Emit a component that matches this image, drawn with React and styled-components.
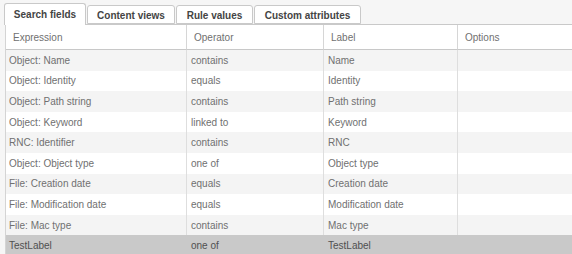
import React from "react";
import styled, { createGlobalStyle } from "styled-components";

const Global = createGlobalStyle`
  html, body { margin: 0; padding: 0; background: #f6f6f6; }
  body { font-family: "Liberation Sans", Arial, Helvetica, sans-serif; }
`;

const Page = styled.div`
  width: 572px;
  height: 254px;
  overflow: hidden;
  background: #f6f6f6;
  padding: 3px 0 0 4px;
  box-sizing: border-box;
  display: flex;
  flex-direction: column;
`;

const TabBar = styled.div`
  display: flex;
  align-items: flex-end;
  gap: 1px;
  height: 21px;
  position: relative;
  z-index: 1;
`;

const Tab = styled.div`
  box-sizing: border-box;
  height: ${(p) => (p.$active ? "22px" : "19px")};
  margin-bottom: ${(p) => (p.$active ? "-1px" : "0")};
  width: ${(p) => p.$w}px;
  display: flex;
  align-items: center;
  justify-content: center;
  padding-top: ${(p) => (p.$active ? "0" : "1px")};
  background: #ffffff;
  border: 1px solid #c9c9c9;
  border-bottom: ${(p) => (p.$active ? "none" : "1px solid #c9c9c9")};
  border-radius: 3px 3px 0 0;
  font-size: 10px;
  font-weight: bold;
  color: #444;
  white-space: nowrap;
`;

const Table = styled.div`
  margin-left: 1px;
  background: #ffffff;
  border-top: 1px solid #c9c9c9;
  border-left: 1px solid #d4d4d4;
  display: grid;
  grid-template-columns: 180px 137px 134px 1fr;
  flex: 1;
  align-content: start;
`;

const HeadCell = styled.div`
  box-sizing: border-box;
  height: 25px;
  display: flex;
  align-items: center;
  padding-left: 7px;
  font-size: 10px;
  color: #707070;
  background: #ffffff;
  border-bottom: 1px solid #c8c8c8;
  border-left: ${(p) => (p.$first ? "none" : "1px solid #d6d6d6")};
`;

const Cell = styled.div`
  box-sizing: border-box;
  height: 20.6px;
  display: flex;
  align-items: center;
  padding-left: ${(p) => (p.$first ? "3px" : "4px")};
  font-size: 10px;
  color: ${(p) => (p.$selected ? "#505050" : "#707070")};
  background: ${(p) =>
    p.$selected ? "#c9c9c9" : p.$odd ? "#f4f4f4" : "#ffffff"};
  border-left: ${(p) =>
    p.$first ? "none" : p.$selected ? "1px solid #c9c9c9" : "1px solid #dedede"};
  white-space: nowrap;
`;

const tabs = [
  { label: "Search fields", w: 82, active: true },
  { label: "Content views", w: 88 },
  { label: "Rule values", w: 77 },
  { label: "Custom attributes", w: 107 },
];

const rows = [
  ["Object: Name", "contains", "Name"],
  ["Object: Identity", "equals", "Identity"],
  ["Object: Path string", "contains", "Path string"],
  ["Object: Keyword", "linked to", "Keyword"],
  ["RNC: Identifier", "contains", "RNC"],
  ["Object: Object type", "one of", "Object type"],
  ["File: Creation date", "equals", "Creation date"],
  ["File: Modification date", "equals", "Modification date"],
  ["File: Mac type", "contains", "Mac type"],
  ["TestLabel", "one of", "TestLabel"],
];

export default function App() {
  return (
    <>
      <Global />
      <Page>
        <TabBar>
          {tabs.map((t) => (
            <Tab key={t.label} $w={t.w} $active={t.active}>
              {t.label}
            </Tab>
          ))}
        </TabBar>
        <Table>
          <HeadCell $first>Expression</HeadCell>
          <HeadCell>Operator</HeadCell>
          <HeadCell>Label</HeadCell>
          <HeadCell>Options</HeadCell>
          {rows.map((r, i) => {
            const odd = i % 2 === 0;
            const selected = i === rows.length - 1;
            return (
              <React.Fragment key={i}>
                <Cell $first $odd={odd} $selected={selected}>{r[0]}</Cell>
                <Cell $odd={odd} $selected={selected}>{r[1]}</Cell>
                <Cell $odd={odd} $selected={selected}>{r[2]}</Cell>
                <Cell $odd={odd} $selected={selected}></Cell>
              </React.Fragment>
            );
          })}
        </Table>
      </Page>
    </>
  );
}
